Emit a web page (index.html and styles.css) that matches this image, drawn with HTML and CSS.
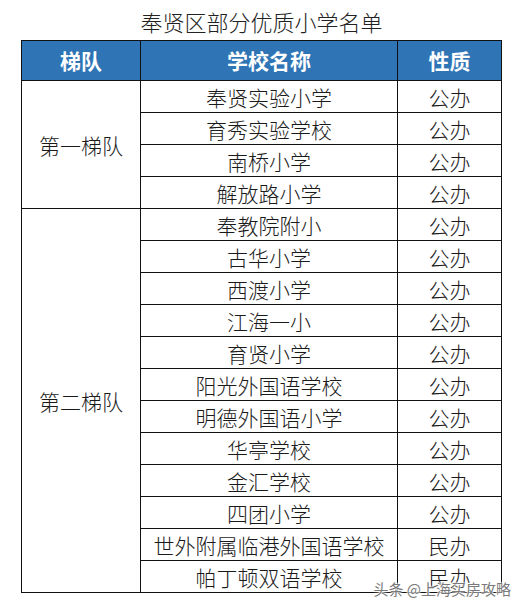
FILE: index.html
```html
<!DOCTYPE html>
<html lang="zh-CN">
<head>
<meta charset="utf-8">
<link rel="stylesheet" href="styles.css">
</head>
<body>
<div class="page">
  <h1 class="title">奉贤区部分优质小学名单</h1>
  <table class="list">
    <colgroup><col class="c1"><col class="c2"><col class="c3"></colgroup>
    <thead>
      <tr><th>梯队</th><th>学校名称</th><th>性质</th></tr>
    </thead>
    <tbody>
      <tr><td rowspan="4" class="tier">第一梯队</td><td>奉贤实验小学</td><td>公办</td></tr>
      <tr><td>育秀实验学校</td><td>公办</td></tr>
      <tr><td>南桥小学</td><td>公办</td></tr>
      <tr><td>解放路小学</td><td>公办</td></tr>
      <tr><td rowspan="12" class="tier">第二梯队</td><td>奉教院附小</td><td>公办</td></tr>
      <tr><td>古华小学</td><td>公办</td></tr>
      <tr><td>西渡小学</td><td>公办</td></tr>
      <tr><td>江海一小</td><td>公办</td></tr>
      <tr><td>育贤小学</td><td>公办</td></tr>
      <tr><td>阳光外国语学校</td><td>公办</td></tr>
      <tr><td>明德外国语小学</td><td>公办</td></tr>
      <tr><td>华亭学校</td><td>公办</td></tr>
      <tr><td>金汇学校</td><td>公办</td></tr>
      <tr><td>四团小学</td><td>公办</td></tr>
      <tr><td>世外附属临港外国语学校</td><td>民办</td></tr>
      <tr><td>帕丁顿双语学校</td><td>民办</td></tr>
    </tbody>
  </table>
  <div class="mark">头条 @上海买房攻略</div>
</div>
</body>
</html>
```

FILE: styles.css
```css
html, body {
  margin: 0;
  padding: 0;
  background: #fff;
}
body {
  font-family: "Noto Sans CJK SC", "Noto Sans", sans-serif;
  color: #1a1a1a;
}
.page {
  position: relative;
  width: 523px;
  height: 609px;
  overflow: hidden;
}
.title {
  margin: 0;
  height: 40px;
  line-height: 42px;
  text-align: center;
  font-size: 22px;
  font-weight: 300;
  color: #222;
}
.list {
  margin-left: 21px;
  border-collapse: collapse;
  table-layout: fixed;
  width: 481px;
  font-size: 21px;
}
.c1 { width: 119px; }
.c2 { width: 257px; }
.c3 { width: 104px; }
.list th, .list td {
  border: 1px solid #111;
  padding: 0;
  text-align: center;
  white-space: nowrap;
}
.list th {
  height: 39px;
  background: #2f74b5;
  color: #fff;
  font-weight: 700;
  font-size: 21px;
  line-height: 39px;
}
.list td {
  height: 30px;
  line-height: 30px;
  padding-top: 1px;
  font-weight: 300;
}
.mark {
  position: absolute;
  right: 12px;
  top: 580px;
  font-size: 15px;
  line-height: 18px;
  color: #7a7a7a;
  text-shadow: 0 0 2px #fff, 0 0 2px #fff, 0 0 2px #fff;
}
```
